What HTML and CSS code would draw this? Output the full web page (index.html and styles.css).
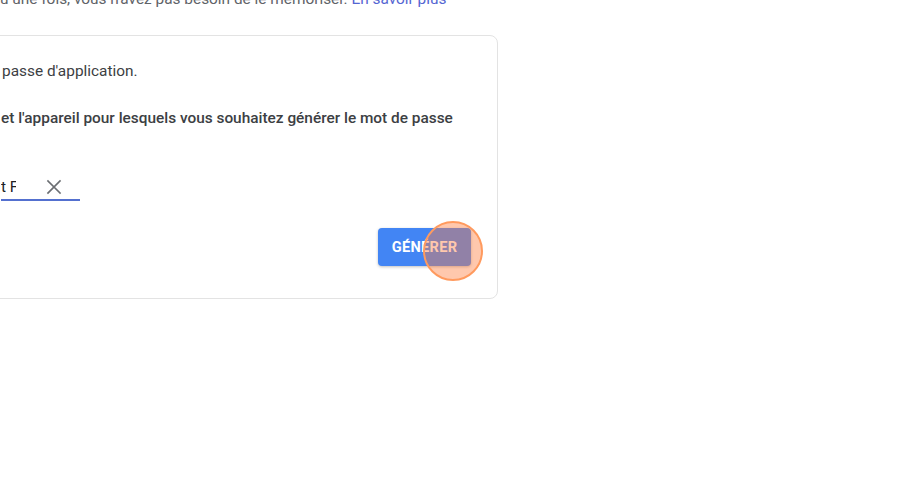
FILE: index.html
```html
<!DOCTYPE html>
<html lang="fr">
<head>
<meta charset="utf-8">
<title>Mots de passe des applications</title>
<link rel="stylesheet" href="styles.css">
</head>
<body>
<div class="page">
  <p class="intro">u une fois, vous n'avez pas besoin de le mémoriser. <a class="link" href="#">En savoir plus</a></p>
  <section class="card">
    <p class="desc">passe d'application.</p>
    <p class="label">et l'appareil pour lesquels vous souhaitez générer le mot de passe</p>
    <div class="field">
      <span class="field-text">t Fo</span>
      <span class="clear" aria-label="Effacer">
        <svg width="16" height="16" viewBox="0 0 16 16"><path d="M2 2 L14 14 M14 2 L2 14" stroke="#6b6e72" stroke-width="1.7" fill="none" stroke-linecap="square"/></svg>
      </span>
    </div>
    <div class="actions">
      <button class="btn">GÉNÉRER<span class="click"></span></button>
    </div>
  </section>
</div>
</body>
</html>
```

FILE: styles.css
```css
html, body {
  margin: 0;
  padding: 0;
  background: #ffffff;
  overflow: hidden;
}
body {
  width: 910px;
  height: 502px;
  font-family: Roboto, "Liberation Sans", Arial, sans-serif;
  font-size: 15.4px;
  line-height: 20px;
}
.page {
  margin-top: -11px;
}
.intro {
  margin: 0;
  color: #5f6368;
  white-space: nowrap;
}
.link {
  color: #5566d2;
  text-decoration: none;
}
.card {
  margin: 26px 0 0 -30px;
  width: 528px;
  box-sizing: border-box;
  border: 1px solid #e3e3e3;
  border-radius: 8px;
  padding: 25px 26px 32px 30px;
}
.desc {
  margin: 0 0 0 1px;
  color: #3c4043;
}
.label {
  margin: 27px 0 0 0;
  color: #3c4043;
  font-weight: 500;
  white-space: nowrap;
}
.field {
  margin-top: 49px;
  width: 79px;
  display: flex;
  align-items: center;
  padding-bottom: 2px;
  border-bottom: 2px solid #5470cf;
}
.field-text {
  width: 15px;
  overflow: hidden;
  white-space: nowrap;
  color: #202124;
}
.clear {
  display: flex;
  margin-left: 30px;
}
.actions {
  margin-top: 27px;
  display: flex;
  justify-content: flex-end;
}
.btn {
  position: relative;
  width: 93px;
  height: 38px;
  border: none;
  border-radius: 4px;
  background: #4285f4;
  color: #ffffff;
  font-family: Roboto, "Liberation Sans", Arial, sans-serif;
  font-size: 14.6px;
  font-weight: 700;
  letter-spacing: 0.3px;
  box-shadow: 0 1px 3px rgba(0, 0, 0, 0.25);
  padding: 0;
}
.click {
  position: absolute;
  left: 45px;
  top: -7px;
  width: 56px;
  height: 56px;
  border: 2px solid #ff9a5e;
  border-radius: 50%;
  background: rgba(255, 125, 60, 0.42);
}
```
